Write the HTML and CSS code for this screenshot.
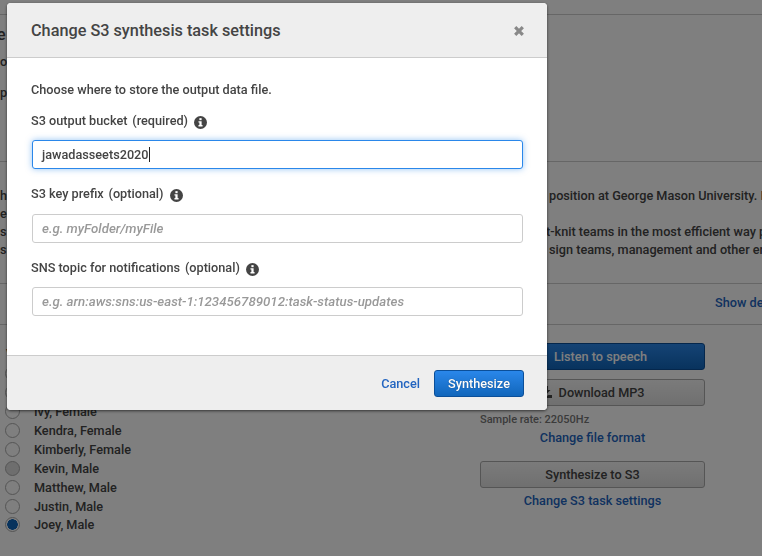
FILE: index.html
```html
<!DOCTYPE html>
<html>
<head>
<title>Change S3 synthesis task settings</title>
<link rel="stylesheet" href="styles.css">
</head>
<body>

<div class="page">
    <div class="band band-top"></div>
    <div class="band band-intro">
        <div class="frag frag-title">e</div>
        <div class="frag frag-o">o</div>
        <div class="frag frag-p">p</div>
    </div>
    <div class="band band-text">
        <div class="text-line"><span class="text-left">hi</span><span class="text-right">position at George Mason University. I</span></div>
        <div class="text-line"><span class="text-left">er</span><span class="text-right"></span></div>
        <div class="text-line"><span class="text-left">s</span><span class="text-right knit">t-knit teams in the most efficient way p</span></div>
        <div class="text-line"><span class="text-left">s</span><span class="text-right">sign teams, management and other eng</span></div>
    </div>
    <div class="band band-show">
        <a class="link show-link">Show details</a>
    </div>
    <div class="columns">
        <div class="voices">
            <div class="voice-head">Voice</div>
            <div class="voice"><span class="radio"></span>Joanna, Female</div>
            <div class="voice"><span class="radio"></span>Salli, Female</div>
            <div class="voice"><span class="radio"></span>Ivy, Female</div>
            <div class="voice"><span class="radio"></span>Kendra, Female</div>
            <div class="voice"><span class="radio"></span>Kimberly, Female</div>
            <div class="voice"><span class="radio radio-hover"></span>Kevin, Male</div>
            <div class="voice"><span class="radio"></span>Matthew, Male</div>
            <div class="voice voice-tight"><span class="radio"></span>Justin, Male</div>
            <div class="voice"><span class="radio radio-on"></span>Joey, Male</div>
        </div>
        <div class="actions">
            <button class="btn btn-primary">Listen to speech</button>
            <button class="btn btn-plain">
                <svg class="dl-icon" viewBox="0 0 12 12" width="12" height="12"><path d="M4 0h4v4h2.500L6 8.500 1.500 4H4zM0 9h3.500L6 10.500 8.500 9H12v3H0z" fill="#444"/></svg>
                Download MP3
            </button>
            <div class="sample">Sample rate: 22050Hz</div>
            <a class="link action-link">Change file format</a>
            <button class="btn btn-plain btn-s3">Synthesize to S3</button>
            <a class="link action-link s3-link">Change S3 task settings</a>
        </div>
    </div>
</div>

<div class="overlay"></div>

<div class="modal">
    <div class="modal-header">
        <h2 class="modal-title">Change S3 synthesis task settings</h2>
        <svg class="close" viewBox="0 0 10 10" width="10" height="10"><path d="M1.200 1.200l7.600 7.600M8.800 1.200l-7.600 7.600" stroke="#888" stroke-width="3.200"/></svg>
    </div>
    <div class="modal-body">
        <p class="intro">Choose where to store the output data file.</p>

        <label class="field-label field-first">S3 output bucket&nbsp; <span class="hint">(required)</span>
            <svg class="info" viewBox="0 0 14 14" width="13" height="13"><circle cx="7" cy="7" r="7" fill="#444"/><rect x="5.800" y="2.300" width="2.400" height="2.200" fill="#fff"/><path d="M4.800 5.600h3.400v4.200h1v1.400H4.800V9.800h1V7H4.800z" fill="#fff"/></svg>
        </label>
        <div class="input input-focus">jawadasseets2020<span class="caret"></span></div>

        <label class="field-label field-prefix">S3 key prefix&nbsp; <span class="hint">(optional)</span>
            <svg class="info" viewBox="0 0 14 14" width="13" height="13"><circle cx="7" cy="7" r="7" fill="#444"/><rect x="5.800" y="2.300" width="2.400" height="2.200" fill="#fff"/><path d="M4.800 5.600h3.400v4.200h1v1.400H4.800V9.800h1V7H4.800z" fill="#fff"/></svg>
        </label>
        <div class="input input-empty">e.g. myFolder/myFile</div>

        <label class="field-label">SNS topic for notifications&nbsp; <span class="hint">(optional)</span>
            <svg class="info" viewBox="0 0 14 14" width="13" height="13"><circle cx="7" cy="7" r="7" fill="#444"/><rect x="5.800" y="2.300" width="2.400" height="2.200" fill="#fff"/><path d="M4.800 5.600h3.400v4.200h1v1.400H4.800V9.800h1V7H4.800z" fill="#fff"/></svg>
        </label>
        <div class="input input-empty">e.g. arn:aws:sns:us-east-1:123456789012:task-status-updates</div>
    </div>
    <div class="modal-footer">
        <a class="cancel">Cancel</a>
        <button class="synth">Synthesize</button>
    </div>
</div>

</body>
</html>
```

FILE: styles.css
```css
html, body {
    margin: 0;
    padding: 0;
    height: 100%;
    overflow: hidden;
}
body {
    font-family: Roboto, sans-serif;
    font-size: 12.700px;
    font-weight: 500;
    color: #444;
    background: #fff;
}

/* page behind the dialog */
.page {
    width: 762px;
    height: 556px;
    overflow: hidden;
}
.band {
    border-bottom: 1px solid #ccc;
    box-sizing: border-box;
}
.band-top {
    height: 15px;
}
.band-intro {
    height: 147px;
    padding-top: 11px;
}
.frag {
    line-height: 18px;
}
.frag-title {
    font-size: 16px;
    margin-left: -3px;
}
.frag-o {
    margin-top: 9px;
}
.frag-p {
    margin-top: 13px;
}
.band-text {
    height: 122px;
    padding-top: 25px;
}
.text-line {
    display: flex;
    height: 18px;
    white-space: nowrap;
    line-height: 18px;
}
.text-left {
    flex: none;
    width: 549px;
}
.text-right {
    flex: none;
}
.knit {
    margin-left: -3px;
}
.band-show {
    height: 41px;
    padding: 11px 0 0 715px;
    white-space: nowrap;
}
.link {
    color: #2264c0;
}
.columns {
    display: flex;
}
.voices {
    width: 480px;
    box-sizing: border-box;
    padding: 21px 0 0 5px;
}
.voice-head {
    height: 18px;
    margin-left: 1px;
}
.voice {
    display: flex;
    align-items: center;
    height: 19px;
}
.voice-tight {
    height: 18px;
}
.radio {
    width: 13px;
    height: 13px;
    border: 1px solid #aaa;
    border-radius: 50%;
    margin-right: 14px;
    background: #fff;
}
.radio-hover {
    background: #ddd;
}
.radio-on {
    background: radial-gradient(circle, #1166bb 0 5px, #fff 5.500px);
}
.actions {
    width: 225px;
    display: flex;
    flex-direction: column;
    align-items: stretch;
    padding-top: 18px;
}
.btn {
    font-family: inherit;
    font-size: 12.700px;
    font-weight: 500;
    height: 27px;
    border-radius: 3px;
    padding: 0;
}
.btn-primary {
    color: #fff;
    background: linear-gradient(#2a87ea, #1166bb);
    border: 1px solid #0b4f99;
    padding-left: 16px;
}
.btn-plain {
    color: #444;
    background: linear-gradient(#f6f6f6, #e0e0e0);
    border: 1px solid #aaa;
    margin-top: 9px;
}
.dl-icon {
    vertical-align: -1px;
    margin-right: 3px;
}
.sample {
    font-size: 11px;
    color: #777;
    line-height: 14px;
    margin-top: 7px;
}
.action-link {
    text-align: center;
    line-height: 18px;
    margin-top: 2px;
}
.btn-s3 {
    margin-top: 14px;
    height: 27px;
}
.s3-link {
    margin-top: 4px;
}

.overlay {
    position: fixed;
    inset: 0;
    background: rgba(0, 0, 0, 0.5);
}

/* dialog */
.modal {
    position: absolute;
    left: 7px;
    top: 3px;
    width: 540px;
    height: 407px;
    display: flex;
    flex-direction: column;
    background: #fff;
    border-radius: 4px;
    box-shadow: 0 1px 3px rgba(0, 0, 0, 0.6);
    overflow: hidden;
}
.modal-header {
    height: 55px;
    flex: none;
    box-sizing: border-box;
    display: flex;
    align-items: center;
    justify-content: space-between;
    padding: 0 23px 0 24px;
    background: #eee;
    border-bottom: 1px solid #ccc;
}
.modal-title {
    margin: 0;
    font-size: 16.260px;
    font-weight: 500;
    color: #444;
}
.close {
    margin-top: 2px;
}
.modal-body {
    flex: 1;
    padding: 0 24px;
}
.intro {
    margin: 24px 0 0;
    line-height: 16px;
}
.field-label {
    display: block;
    margin-top: 14px;
    line-height: 16px;
}
.field-first {
    margin-top: 15px;
}
.field-prefix {
    padding-bottom: 1px;
}
.hint {
    margin-left: -1.500px;
}
.info {
    vertical-align: -4px;
    margin-left: 3px;
}
.input {
    box-sizing: border-box;
    width: 491px;
    height: 29px;
    margin: 11px 0 0 1px;
    padding: 0 9px;
    border: 1px solid #ccc;
    border-radius: 3px;
    line-height: 27px;
    background: #fff;
}
.input-focus {
    border-color: #2a87ea;
    box-shadow: 0 0 6px rgba(42, 135, 234, 0.5);
    margin-bottom: 17px;
}
.input-empty {
    color: #999;
    font-size: 13.270px;
    font-style: italic;
    margin-bottom: 17px;
}
.caret {
    display: inline-block;
    width: 1px;
    height: 15px;
    background: #222;
    vertical-align: -3px;
}
.modal-footer {
    height: 55px;
    flex: none;
    box-sizing: border-box;
    display: flex;
    align-items: center;
    justify-content: flex-end;
    padding: 0 23px 0 0;
    background: #eee;
    border-top: 1px solid #ccc;
}
.cancel {
    color: #2264c0;
    margin-right: 14px;
}
.synth {
    width: 90px;
    height: 27px;
    padding: 0;
    font-family: inherit;
    font-size: 12.700px;
    font-weight: 500;
    color: #fff;
    background: linear-gradient(#2a87ea, #1166bb);
    border: 1px solid #0b4f99;
    border-radius: 3px;
    text-shadow: 0 0 1px rgba(0, 0, 0, 0.5);
}
```
